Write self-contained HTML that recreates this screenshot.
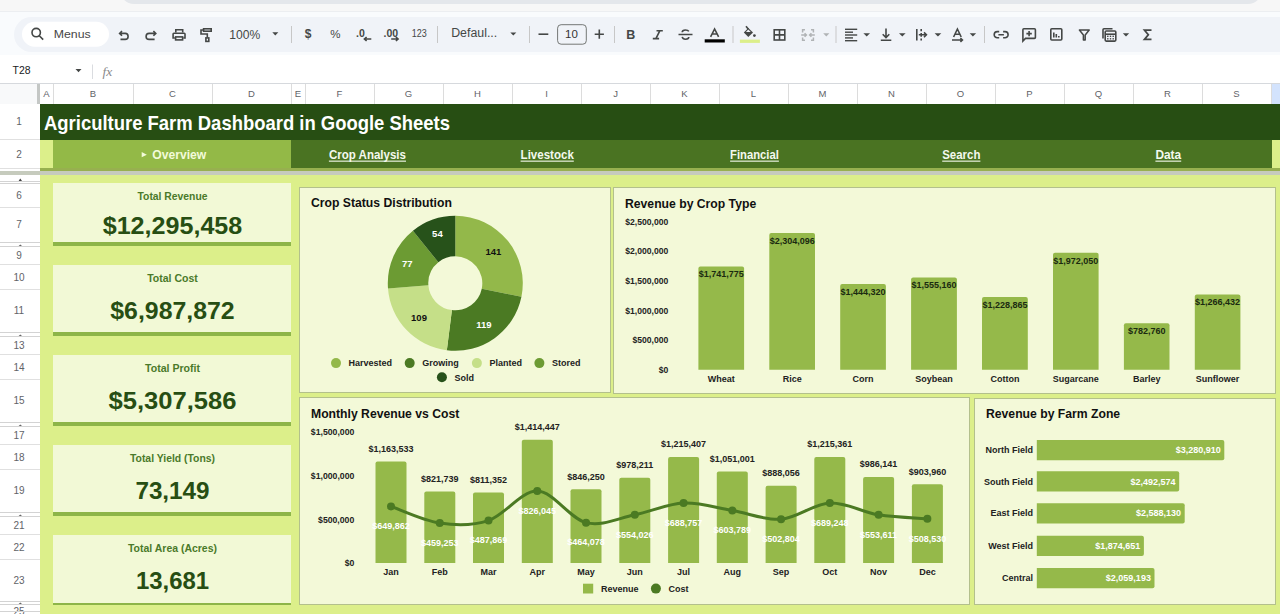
<!DOCTYPE html><html><head><meta charset="utf-8"><style>
*{margin:0;padding:0;box-sizing:border-box}
html,body{width:1280px;height:614px;overflow:hidden;background:#f9fbfd;font-family:"Liberation Sans",sans-serif}
.a{position:absolute}
.ch{position:absolute;top:84px;height:20px;color:#5f6368;font-size:9.5px;text-align:center;line-height:19.5px}
.rh{position:absolute;left:0;width:38px;color:#5f6368;font-size:10px;text-align:center}
.card{position:absolute;left:53px;width:238px;background:#f2f9d6;border-bottom:4px solid #8db548}
.ct{position:absolute;left:0;width:238px;text-align:center;color:#3f6a1f;font-weight:bold;font-size:11px}
.cv{position:absolute;left:0;width:238px;text-align:center;color:#274e13;font-weight:bold;font-size:27px}
.chart{position:absolute;background:#f3f9d8;border:1px solid #b3c08c}
.tt{position:absolute;font-weight:bold;font-size:12.5px;color:#111;white-space:nowrap}
.nav{position:absolute;top:140px;height:28px;line-height:28px;color:#fff;font-weight:bold;font-size:12px;text-decoration:underline;white-space:nowrap;text-align:center}
</style></head><body>
<div class="a" style="left:0;top:0;width:1280px;height:11px;background:#f7f7f7"></div>
<div class="a" style="left:120px;top:-20px;width:1142px;height:24px;background:#e4e7eb;border-radius:0 0 14px 14px"></div>
<div class="a" style="left:0;top:11px;width:1280px;height:1px;background:#eceef1"></div>
<div class="a" style="left:14px;top:17px;width:1300px;height:34.5px;background:#f0f3f8;border-radius:18px"></div>
<div class="a" style="left:0;top:55px;width:1280px;height:29px;background:#fff"></div>
<svg class="a" style="left:0;top:0" width="1280" height="90"><rect x="22" y="21.75" width="87" height="25" rx="12.5" fill="#fff"/><circle cx="36.2" cy="32.6" r="4.2" fill="none" stroke="#444746" stroke-width="1.6" stroke-width="1.7"/><path d="M39.3,35.7 L43.2,39.6" fill="none" stroke="#444746" stroke-width="1.6" stroke-width="1.9"/><text x="53.75" y="37.8" font-family="Liberation Sans" font-size="11.5" fill="#474747" textLength="37" lengthAdjust="spacingAndGlyphs">Menus</text><path d="M120.5,39.4 H125.1 A3,3 0 0 0 125.1,33.4 H119.6 M122,31 L119.6,33.4 L122,35.8" fill="none" stroke="#444746" stroke-width="1.6"/><path d="M154.6,39.4 H149.1 A3,3 0 0 1 149.1,33.4 H155.8 M153.4,31 L155.8,33.4 L153.4,35.8" fill="none" stroke="#444746" stroke-width="1.6"/><path d="M175.8,32.4 V29.7 H182.7 V32.4" fill="none" stroke="#444746" stroke-width="1.6" stroke-width="1.5"/><path d="M174.9,38 H173.1 V34 Q173.1,33.3 173.9,33.3 H184.2 Q185,33.3 185,34 V38 H183.3" fill="none" stroke="#444746" stroke-width="1.6" stroke-width="1.5"/><rect x="175.6" y="36.9" width="7" height="3" fill="none" stroke="#444746" stroke-width="1.6" stroke-width="1.5"/><rect x="203.6" y="28.8" width="7.6" height="2.4" fill="none" stroke="#444746" stroke-width="1.6" stroke-width="1.5"/><path d="M203.4,30 H201 V34 H207.3 V37.5" fill="none" stroke="#444746" stroke-width="1.6" stroke-width="1.5"/><rect x="205.9" y="37.9" width="2.9" height="3.5" fill="none" stroke="#444746" stroke-width="1.6" stroke-width="1.5"/><text x="229.2" y="39" font-family="Liberation Sans" font-size="12.3" fill="#444746" textLength="31" lengthAdjust="spacingAndGlyphs">100%</text><path d="M272.3,32.2 L278.3,32.2 L275.3,35.400000000000006Z" fill="#444746"/><rect x="291" y="26" width="1" height="17" fill="#c7c7c7"/><text x="308" y="38" font-family="Liberation Sans" font-weight="bold" font-size="12" fill="#444746" text-anchor="middle">$</text><text x="335.3" y="37.8" font-family="Liberation Sans" font-size="11.5" fill="#444746" text-anchor="middle">%</text><text x="356" y="37.4" font-family="Liberation Sans" font-weight="bold" font-size="10.5" fill="#444746">.0</text><path d="M371.3,39 H364.5 M366.6,37 L364.4,39 L366.6,41" fill="none" stroke="#444746" stroke-width="1.6" stroke-width="1.4"/><text x="383.5" y="37.4" font-family="Liberation Sans" font-weight="bold" font-size="10.5" fill="#444746">.00</text><path d="M391.2,39 H398 M395.9,37 L398.1,39 L395.9,41" fill="none" stroke="#444746" stroke-width="1.6" stroke-width="1.4"/><text x="411.8" y="37.3" font-family="Liberation Sans" font-size="10" fill="#444746" textLength="15" lengthAdjust="spacingAndGlyphs">123</text><rect x="437" y="26" width="1" height="17" fill="#c7c7c7"/><text x="451.2" y="37.3" font-family="Liberation Sans" font-size="12" fill="#444746" textLength="46" lengthAdjust="spacingAndGlyphs">Defaul...</text><path d="M510.3,32.4 L516.3,32.4 L513.3,35.6Z" fill="#444746"/><rect x="529" y="26" width="1" height="17" fill="#c7c7c7"/><path d="M538.5,34.2 H548.3" fill="none" stroke="#444746" stroke-width="1.6" stroke-width="1.7"/><rect x="557.6" y="24.7" width="28.7" height="19.5" rx="3.5" fill="none" stroke="#747775" stroke-width="1"/><text x="571.5" y="37.7" font-family="Liberation Sans" font-size="11.5" fill="#333" text-anchor="middle">10</text><path d="M594.7,34.2 H603.9 M599.3,29.6 V38.8" fill="none" stroke="#444746" stroke-width="1.6" stroke-width="1.7"/><rect x="614" y="26" width="1" height="17" fill="#c7c7c7"/><text x="630.7" y="39.3" font-family="Liberation Sans" font-weight="bold" font-size="12.5" fill="#444746" text-anchor="middle">B</text><path d="M656.5,30.7 H662.8 M652.8,38.6 H659.1 M659.9,30.7 L655.9,38.6" fill="none" stroke="#444746" stroke-width="1.6" stroke-width="1.7"/><path d="M678.5,34.5 H692.5 M688.8,31.4 Q688,30 685.5,30 Q682.2,30 682.2,32.3 M682.2,36.8 Q682.7,39.2 685.5,39.2 Q688.8,39.2 688.8,37" fill="none" stroke="#444746" stroke-width="1.6" stroke-width="1.5"/><path d="M710.6,36.8 L714.6,29 L718.6,36.8 M712,34 H717.2" fill="none" stroke="#444746" stroke-width="1.6" stroke-width="1.6"/><rect x="704.7" y="39.3" width="20.1" height="3.2" fill="#000"/><rect x="732.5" y="26" width="1" height="17" fill="#c7c7c7"/><path d="M746,26.3 L748.6,29.6" fill="none" stroke="#444746" stroke-width="1.6" stroke-width="1.5"/><path d="M743.8,32.6 L748.3,28.1 L753,32.6 L748.3,37.1Z" fill="#444746"/><path d="M745.9,32 H750.7 L748.3,29.6Z" fill="#f0f3f8"/><circle cx="754.4" cy="35.6" r="1.4" fill="#444746"/><rect x="739.9" y="39.6" width="20" height="3.3" fill="#dcef8a"/><rect x="774.2" y="29.8" width="10.6" height="10.2" fill="none" stroke="#444746" stroke-width="1.6" stroke-width="1.8"/><path d="M779.5,29.8 V40 M774.2,34.9 H784.8" fill="none" stroke="#444746" stroke-width="1.6" stroke-width="1.6"/><path d="M805,29.8 H802.6 V32.6 M802.6,37.4 V40.2 H805 M811,29.8 H813.4 V32.6 M813.4,37.4 V40.2 H811 M801.2,35 H806.4 M804.6,33.2 L806.4,35 L804.6,36.8 M814.8,35 H809.6 M811.4,33.2 L809.6,35 L811.4,36.8" fill="none" stroke="#b0b3b5" stroke-width="1.5"/><path d="M823.2,33.2 L829.4,33.2 L826.3,36.400000000000006Z" fill="#b0b3b5"/><rect x="835.5" y="26" width="1" height="17" fill="#c7c7c7"/><rect x="845" y="28.6" width="12.2" height="1.4" fill="#444746"/><rect x="845" y="31.500000000000004" width="8" height="1.4" fill="#444746"/><rect x="845" y="34.3" width="12.2" height="1.4" fill="#444746"/><rect x="845" y="37.199999999999996" width="8" height="1.4" fill="#444746"/><rect x="845" y="40.0" width="12.2" height="1.4" fill="#444746"/><path d="M863.4,33.2 L870,33.2 L866.7,36.400000000000006Z" fill="#444746"/><path d="M886,28.6 V37.4 M882.7,34.3 L886,37.6 L889.3,34.3" fill="none" stroke="#444746" stroke-width="1.6" stroke-width="1.6"/><rect x="880.8" y="39.5" width="10.5" height="1.5" fill="#444746"/><path d="M899,33.2 L905.6,33.2 L902.3,36.400000000000006Z" fill="#444746"/><path d="M916.8,29 V40.6 M921.2,29 V31.2 M921.2,33 V36.7 M921.2,38.4 V40.6 M918.8,34.8 H926.3 M924,32.4 L926.4,34.8 L924,37.2" fill="none" stroke="#444746" stroke-width="1.6" stroke-width="1.5"/><path d="M934.6,33.2 L941.3,33.2 L937.95,36.400000000000006Z" fill="#444746"/><path d="M953.6,37 L957.4,29 L961.2,37 M954.9,34.3 H960" fill="none" stroke="#444746" stroke-width="1.6" stroke-width="1.5"/><path d="M952,40 H962.3 M960.4,38.1 L962.4,40 L960.4,41.9" fill="none" stroke="#444746" stroke-width="1.6" stroke-width="1.4"/><path d="M969.7,33.2 L976.1,33.2 L972.9000000000001,36.400000000000006Z" fill="#444746"/><rect x="984" y="26" width="1" height="17" fill="#c7c7c7"/><path d="M999.2,31.6 H997.3 A3.1,3.1 0 0 0 997.3,37.8 H999.2 M1003.1,31.6 H1005 A3.1,3.1 0 0 1 1005,37.8 H1003.1 M998.4,34.7 H1003.9" fill="none" stroke="#444746" stroke-width="1.6" stroke-width="1.6"/><path d="M1022.9,41 V29.8 Q1022.9,28.8 1023.9,28.8 H1034.4 Q1035.4,28.8 1035.4,29.8 V37.4 Q1035.4,38.4 1034.4,38.4 H1025.5 Z M1029.1,30.9 V36.3 M1026.4,33.6 H1031.8" fill="none" stroke="#444746" stroke-width="1.6" stroke-width="1.5"/><rect x="1050.8" y="28.8" width="11" height="11.2" rx="1" fill="none" stroke="#444746" stroke-width="1.6" stroke-width="1.5"/><path d="M1053.8,32.5 V37.5 M1056.3,34 V37.5 M1058.8,36 V37.5" fill="none" stroke="#444746" stroke-width="1.6" stroke-width="1.3"/><path d="M1079.4,30 H1089.2 L1085.2,35 V40 H1083.4 V35Z" fill="none" stroke="#444746" stroke-width="1.5" stroke-linejoin="round"/><path d="M1103,38.5 V29.7 Q1103,28.7 1104,28.7 H1112.5" fill="none" stroke="#444746" stroke-width="1.6" stroke-width="1.4"/><rect x="1105.2" y="31" width="10.6" height="10.1" rx="1" fill="none" stroke="#444746" stroke-width="1.6" stroke-width="1.5"/><path d="M1105.5,34.2 H1115.5" fill="none" stroke="#444746" stroke-width="1.6" stroke-width="1.4"/><rect x="1107.1" y="35.599999999999994" width="1.4" height="1.4" fill="#444746"/><rect x="1107.1" y="38.099999999999994" width="1.4" height="1.4" fill="#444746"/><rect x="1109.8" y="35.599999999999994" width="1.4" height="1.4" fill="#444746"/><rect x="1109.8" y="38.099999999999994" width="1.4" height="1.4" fill="#444746"/><rect x="1112.5" y="35.599999999999994" width="1.4" height="1.4" fill="#444746"/><rect x="1112.5" y="38.099999999999994" width="1.4" height="1.4" fill="#444746"/><path d="M1122.8,33.2 L1129.2,33.2 L1126.0,36.400000000000006Z" fill="#444746"/><path d="M1151.5,30.2 H1144.5 L1148.3,34.8 L1144.5,39.4 H1151.5" fill="none" stroke="#444746" stroke-width="1.8"/><text x="12.5" y="74.4" font-family="Liberation Sans" font-size="11" fill="#202124" textLength="18" lengthAdjust="spacingAndGlyphs">T28</text><path d="M75.5,69 L81.5,69 L78.5,72.2Z" fill="#444746"/><rect x="92" y="64.5" width="1" height="14.5" fill="#dadce0"/><text x="102.5" y="75.5" font-family="Liberation Serif" font-style="italic" font-size="13.5" fill="#8a8a8a">fx</text></svg>
<div class="a" style="left:0;top:83px;width:1280px;height:1px;background:#d6d9dd"></div>
<div class="a" style="left:0;top:84px;width:1280px;height:20px;background:#fff"></div>
<div class="ch" style="left:40px;width:13px">A</div>
<div class="a" style="left:53px;top:84px;width:1px;height:20px;background:#dcdcdc"></div>
<div class="ch" style="left:53px;width:80px">B</div>
<div class="a" style="left:133px;top:84px;width:1px;height:20px;background:#dcdcdc"></div>
<div class="ch" style="left:133px;width:79px">C</div>
<div class="a" style="left:212px;top:84px;width:1px;height:20px;background:#dcdcdc"></div>
<div class="ch" style="left:212px;width:79px">D</div>
<div class="a" style="left:291px;top:84px;width:1px;height:20px;background:#dcdcdc"></div>
<div class="ch" style="left:291px;width:14px">E</div>
<div class="a" style="left:305px;top:84px;width:1px;height:20px;background:#dcdcdc"></div>
<div class="ch" style="left:305px;width:69px">F</div>
<div class="a" style="left:374px;top:84px;width:1px;height:20px;background:#dcdcdc"></div>
<div class="ch" style="left:374px;width:69px">G</div>
<div class="a" style="left:443px;top:84px;width:1px;height:20px;background:#dcdcdc"></div>
<div class="ch" style="left:443px;width:69px">H</div>
<div class="a" style="left:512px;top:84px;width:1px;height:20px;background:#dcdcdc"></div>
<div class="ch" style="left:512px;width:69px">I</div>
<div class="a" style="left:581px;top:84px;width:1px;height:20px;background:#dcdcdc"></div>
<div class="ch" style="left:581px;width:69px">J</div>
<div class="a" style="left:650px;top:84px;width:1px;height:20px;background:#dcdcdc"></div>
<div class="ch" style="left:650px;width:69px">K</div>
<div class="a" style="left:719px;top:84px;width:1px;height:20px;background:#dcdcdc"></div>
<div class="ch" style="left:719px;width:69px">L</div>
<div class="a" style="left:788px;top:84px;width:1px;height:20px;background:#dcdcdc"></div>
<div class="ch" style="left:788px;width:69px">M</div>
<div class="a" style="left:857px;top:84px;width:1px;height:20px;background:#dcdcdc"></div>
<div class="ch" style="left:857px;width:69px">N</div>
<div class="a" style="left:926px;top:84px;width:1px;height:20px;background:#dcdcdc"></div>
<div class="ch" style="left:926px;width:69px">O</div>
<div class="a" style="left:995px;top:84px;width:1px;height:20px;background:#dcdcdc"></div>
<div class="ch" style="left:995px;width:69px">P</div>
<div class="a" style="left:1064px;top:84px;width:1px;height:20px;background:#dcdcdc"></div>
<div class="ch" style="left:1064px;width:69px">Q</div>
<div class="a" style="left:1133px;top:84px;width:1px;height:20px;background:#dcdcdc"></div>
<div class="ch" style="left:1133px;width:69px">R</div>
<div class="a" style="left:1202px;top:84px;width:1px;height:20px;background:#dcdcdc"></div>
<div class="ch" style="left:1202px;width:69px">S</div>
<div class="a" style="left:1271px;top:84px;width:1px;height:20px;background:#dcdcdc"></div>
<div class="a" style="left:1272px;top:84px;width:8px;height:20px;background:#d3e3fd"></div>
<div class="a" style="left:0;top:84px;width:37px;height:20px;background:#f8f9fa"></div>
<div class="a" style="left:37px;top:84px;width:3px;height:20px;background:#c4c7c5"></div>
<div class="a" style="left:0;top:104px;width:40px;height:510px;background:#fff"></div>
<div class="rh" style="top:104px;height:36px;line-height:36px">1</div>
<div class="a" style="left:0;top:139px;width:40px;height:1px;background:#e0e0e0"></div>
<div class="rh" style="top:140px;height:29px;line-height:29px">2</div>
<div class="a" style="left:0;top:168px;width:40px;height:1px;background:#e0e0e0"></div>
<div class="rh" style="top:183px;height:25px;line-height:25px">6</div>
<div class="a" style="left:0;top:207px;width:40px;height:1px;background:#e0e0e0"></div>
<div class="rh" style="top:208px;height:34px;line-height:34px">7</div>
<div class="rh" style="top:246px;height:19px;line-height:19px">9</div>
<div class="a" style="left:0;top:264px;width:40px;height:1px;background:#e0e0e0"></div>
<div class="rh" style="top:265px;height:25px;line-height:25px">10</div>
<div class="a" style="left:0;top:289px;width:40px;height:1px;background:#e0e0e0"></div>
<div class="rh" style="top:290px;height:42px;line-height:42px">11</div>
<div class="rh" style="top:336px;height:19px;line-height:19px">13</div>
<div class="a" style="left:0;top:354px;width:40px;height:1px;background:#e0e0e0"></div>
<div class="rh" style="top:355px;height:25px;line-height:25px">14</div>
<div class="a" style="left:0;top:379px;width:40px;height:1px;background:#e0e0e0"></div>
<div class="rh" style="top:380px;height:42px;line-height:42px">15</div>
<div class="rh" style="top:426px;height:19px;line-height:19px">17</div>
<div class="a" style="left:0;top:444px;width:40px;height:1px;background:#e0e0e0"></div>
<div class="rh" style="top:445px;height:25px;line-height:25px">18</div>
<div class="a" style="left:0;top:469px;width:40px;height:1px;background:#e0e0e0"></div>
<div class="rh" style="top:470px;height:42px;line-height:42px">19</div>
<div class="rh" style="top:516px;height:19px;line-height:19px">21</div>
<div class="a" style="left:0;top:534px;width:40px;height:1px;background:#e0e0e0"></div>
<div class="rh" style="top:535px;height:25px;line-height:25px">22</div>
<div class="a" style="left:0;top:559px;width:40px;height:1px;background:#e0e0e0"></div>
<div class="rh" style="top:560px;height:42px;line-height:42px">23</div>
<div class="rh" style="top:604px;height:16px;line-height:16px">25</div>
<div class="a" style="left:0;top:181px;width:40px;height:1px;background:#d3d3d3"></div>
<div class="a" style="left:0;top:183px;width:40px;height:1px;background:#d3d3d3"></div>
<div class="a" style="left:0;top:242px;width:40px;height:1px;background:#d3d3d3"></div>
<div class="a" style="left:0;top:246px;width:40px;height:1px;background:#d3d3d3"></div>
<div class="a" style="left:0;top:332px;width:40px;height:1px;background:#d3d3d3"></div>
<div class="a" style="left:0;top:336px;width:40px;height:1px;background:#d3d3d3"></div>
<div class="a" style="left:0;top:422px;width:40px;height:1px;background:#d3d3d3"></div>
<div class="a" style="left:0;top:426px;width:40px;height:1px;background:#d3d3d3"></div>
<div class="a" style="left:0;top:512px;width:40px;height:1px;background:#d3d3d3"></div>
<div class="a" style="left:0;top:516px;width:40px;height:1px;background:#d3d3d3"></div>
<div class="a" style="left:0;top:601px;width:40px;height:1px;background:#d3d3d3"></div>
<div class="a" style="left:0;top:604px;width:40px;height:1px;background:#d3d3d3"></div>
<svg class="a" style="left:0;top:0" width="40" height="614"><path d="M18.6,181 L20.3,178.6 L22,181Z" fill="#444"/><path d="M18.6,246 L20.3,244.6 L22,246Z" fill="#666"/><path d="M18.6,336 L20.3,334.6 L22,336Z" fill="#666"/><path d="M18.6,426 L20.3,424.6 L22,426Z" fill="#666"/><path d="M18.6,516 L20.3,514.6 L22,516Z" fill="#666"/><path d="M18.6,604 L20.3,602.6 L22,604Z" fill="#666"/><rect x="0" y="611" width="40" height="1" fill="#d3d3d3"/></svg>
<div class="a" style="left:40px;top:104px;width:1240px;height:510px;background:#dcef8a"></div>
<div class="a" style="left:40px;top:104px;width:1240px;height:36px;background:#274e13"></div>
<div class="a" style="left:53px;top:140px;width:238px;height:28px;background:#93b947"></div>
<div class="a" style="left:291px;top:140px;width:981px;height:28px;background:#4a7322"></div>
<div class="a" style="left:40px;top:168px;width:1240px;height:3px;background:#97b04f"></div>
<div class="a" style="left:0;top:171px;width:1280px;height:4px;background:#c6cbbd"></div>
<div class="card" style="top:183px;height:63px;border-bottom-width:4px"></div>
<div class="card" style="top:265px;height:71px;border-bottom-width:4px"></div>
<div class="card" style="top:355px;height:71px;border-bottom-width:4px"></div>
<div class="card" style="top:445px;height:71px;border-bottom-width:4px"></div>
<div class="card" style="top:535px;height:69.5px;border-bottom-width:2.5px"></div>
<svg class="a" style="left:0;top:0" width="1280" height="614"><text x="44" y="129.7" font-family="Liberation Sans" font-weight="bold" font-size="19.3" fill="#fff" textLength="406" lengthAdjust="spacingAndGlyphs">Agriculture Farm Dashboard in Google Sheets</text><path d="M141.7,152.1 L146.8,154.65 L141.7,157.2Z" fill="#f2fbd9"/><text x="152.3" y="159.1" font-family="Liberation Sans" font-weight="bold" font-size="12.3" fill="#f2fbd9" textLength="54" lengthAdjust="spacingAndGlyphs">Overview</text><text x="328.9" y="159.3" font-family="Liberation Sans" font-weight="bold" font-size="12.3" fill="#f4f9ee" textLength="77.1" lengthAdjust="spacingAndGlyphs">Crop Analysis</text><rect x="328.9" y="160.6" width="77.1" height="1.1" fill="#f4f9ee"/><text x="520.6" y="159.3" font-family="Liberation Sans" font-weight="bold" font-size="12.3" fill="#f4f9ee" textLength="53.2" lengthAdjust="spacingAndGlyphs">Livestock</text><rect x="520.6" y="160.6" width="53.2" height="1.1" fill="#f4f9ee"/><text x="730.1" y="159.3" font-family="Liberation Sans" font-weight="bold" font-size="12.3" fill="#f4f9ee" textLength="48.8" lengthAdjust="spacingAndGlyphs">Financial</text><rect x="730.1" y="160.6" width="48.8" height="1.1" fill="#f4f9ee"/><text x="942.2" y="159.3" font-family="Liberation Sans" font-weight="bold" font-size="12.3" fill="#f4f9ee" textLength="38.2" lengthAdjust="spacingAndGlyphs">Search</text><rect x="942.2" y="160.6" width="38.2" height="1.1" fill="#f4f9ee"/><text x="1155.4" y="159.3" font-family="Liberation Sans" font-weight="bold" font-size="12.3" fill="#f4f9ee" textLength="25.8" lengthAdjust="spacingAndGlyphs">Data</text><rect x="1155.4" y="160.6" width="25.8" height="1.1" fill="#f4f9ee"/><text x="172.5" y="200.2" font-family="Liberation Sans" font-weight="bold" font-size="10.2" fill="#4a7a2a" text-anchor="middle" textLength="70" lengthAdjust="spacingAndGlyphs">Total Revenue</text><text x="172.5" y="233.8" font-family="Liberation Sans" font-weight="bold" font-size="24" fill="#274e13" text-anchor="middle" textLength="139.6" lengthAdjust="spacingAndGlyphs">$12,295,458</text><text x="172.5" y="282.2" font-family="Liberation Sans" font-weight="bold" font-size="10.2" fill="#4a7a2a" text-anchor="middle" textLength="50.6" lengthAdjust="spacingAndGlyphs">Total Cost</text><text x="172.5" y="319.1" font-family="Liberation Sans" font-weight="bold" font-size="24" fill="#274e13" text-anchor="middle" textLength="124.4" lengthAdjust="spacingAndGlyphs">$6,987,872</text><text x="172.5" y="372.2" font-family="Liberation Sans" font-weight="bold" font-size="10.2" fill="#4a7a2a" text-anchor="middle" textLength="55" lengthAdjust="spacingAndGlyphs">Total Profit</text><text x="172.5" y="409.1" font-family="Liberation Sans" font-weight="bold" font-size="24" fill="#274e13" text-anchor="middle" textLength="128" lengthAdjust="spacingAndGlyphs">$5,307,586</text><text x="172.5" y="462.2" font-family="Liberation Sans" font-weight="bold" font-size="10.2" fill="#4a7a2a" text-anchor="middle" textLength="85" lengthAdjust="spacingAndGlyphs">Total Yield (Tons)</text><text x="172.5" y="499.1" font-family="Liberation Sans" font-weight="bold" font-size="24" fill="#274e13" text-anchor="middle" textLength="74.2" lengthAdjust="spacingAndGlyphs">73,149</text><text x="172.5" y="552.2" font-family="Liberation Sans" font-weight="bold" font-size="10.2" fill="#4a7a2a" text-anchor="middle" textLength="89" lengthAdjust="spacingAndGlyphs">Total Area (Acres)</text><text x="172.5" y="589.1" font-family="Liberation Sans" font-weight="bold" font-size="24" fill="#274e13" text-anchor="middle" textLength="73.2" lengthAdjust="spacingAndGlyphs">13,681</text></svg>
<div class="chart" style="left:299px;top:187px;width:312px;height:206px"></div>
<div class="chart" style="left:613px;top:187px;width:663px;height:207px"></div>
<div class="chart" style="left:299px;top:397px;width:671px;height:208px"></div>
<div class="chart" style="left:974px;top:398px;width:302px;height:207px"></div>
<svg class="a" style="left:0;top:0" width="1280" height="614"><text x="311" y="207.3" font-family="Liberation Sans" font-weight="bold" font-size="12.2" fill="#111">Crop Status Distribution</text><text x="625" y="207.5" font-family="Liberation Sans" font-weight="bold" font-size="12.2" fill="#111">Revenue by Crop Type</text><text x="311" y="418.3" font-family="Liberation Sans" font-weight="bold" font-size="12.2" fill="#111">Monthly Revenue vs Cost</text><text x="986" y="418.3" font-family="Liberation Sans" font-weight="bold" font-size="12.2" fill="#111">Revenue by Farm Zone</text><path d="M455.30,215.80 A67.5,67.5 0 0 1 521.44,296.78 L481.76,288.69 A27,27 0 0 0 455.30,256.30Z" fill="#93b84a"/><text x="493.4" y="255.4" font-family="Liberation Sans" font-weight="bold" font-size="9.5" fill="#111" text-anchor="middle">141</text><path d="M521.44,296.78 A67.5,67.5 0 0 1 446.84,350.27 L451.92,310.09 A27,27 0 0 0 481.76,288.69Z" fill="#4b7a23"/><text x="484.0" y="328.0" font-family="Liberation Sans" font-weight="bold" font-size="9.5" fill="#fff" text-anchor="middle">119</text><path d="M446.84,350.27 A67.5,67.5 0 0 1 387.99,288.38 L428.38,285.33 A27,27 0 0 0 451.92,310.09Z" fill="#c5df88"/><text x="419.0" y="320.9" font-family="Liberation Sans" font-weight="bold" font-size="9.5" fill="#111" text-anchor="middle">109</text><path d="M387.99,288.38 A67.5,67.5 0 0 1 412.93,230.75 L438.35,262.28 A27,27 0 0 0 428.38,285.33Z" fill="#6c9b33"/><text x="407.2" y="266.6" font-family="Liberation Sans" font-weight="bold" font-size="9.5" fill="#fff" text-anchor="middle">77</text><path d="M412.93,230.75 A67.5,67.5 0 0 1 455.30,215.80 L455.30,256.30 A27,27 0 0 0 438.35,262.28Z" fill="#27521a"/><text x="437.4" y="237.0" font-family="Liberation Sans" font-weight="bold" font-size="9.5" fill="#fff" text-anchor="middle">54</text><circle cx="336" cy="363.1" r="5" fill="#93b84a"/><text x="348.5" y="366.3" font-family="Liberation Sans" font-weight="bold" font-size="9" fill="#222">Harvested</text><circle cx="409.7" cy="363.1" r="5" fill="#4b7a23"/><text x="422.2" y="366.3" font-family="Liberation Sans" font-weight="bold" font-size="9" fill="#222">Growing</text><circle cx="476.9" cy="363.1" r="5" fill="#c5df88"/><text x="489.4" y="366.3" font-family="Liberation Sans" font-weight="bold" font-size="9" fill="#222">Planted</text><circle cx="539.4" cy="363.1" r="5" fill="#6c9b33"/><text x="551.9" y="366.3" font-family="Liberation Sans" font-weight="bold" font-size="9" fill="#222">Stored</text><circle cx="441.9" cy="377.3" r="5" fill="#27521a"/><text x="454.4" y="380.5" font-family="Liberation Sans" font-weight="bold" font-size="9" fill="#222">Sold</text><text x="668.3" y="372.8" font-family="Liberation Sans" font-weight="bold" font-size="8.6" fill="#222" text-anchor="end">$0</text><text x="668.3" y="343.2" font-family="Liberation Sans" font-weight="bold" font-size="8.6" fill="#222" text-anchor="end">$500,000</text><text x="668.3" y="313.5" font-family="Liberation Sans" font-weight="bold" font-size="8.6" fill="#222" text-anchor="end">$1,000,000</text><text x="668.3" y="283.9" font-family="Liberation Sans" font-weight="bold" font-size="8.6" fill="#222" text-anchor="end">$1,500,000</text><text x="668.3" y="254.2" font-family="Liberation Sans" font-weight="bold" font-size="8.6" fill="#222" text-anchor="end">$2,000,000</text><text x="668.3" y="224.6" font-family="Liberation Sans" font-weight="bold" font-size="8.6" fill="#222" text-anchor="end">$2,500,000</text><path d="M698.4,369.7 L698.4,268.4 Q698.4,266.4 700.4,266.4 L742.1,266.4 Q744.1,266.4 744.1,268.4 L744.1,369.7Z" fill="#95b94a"/><text x="721.3" y="277.1" font-family="Liberation Sans" font-weight="bold" font-size="9" fill="#1a2a10" text-anchor="middle">$1,741,775</text><text x="721.3" y="381.6" font-family="Liberation Sans" font-weight="bold" font-size="9" fill="#222" text-anchor="middle">Wheat</text><path d="M769.3,369.7 L769.3,235.1 Q769.3,233.1 771.3,233.1 L813.0,233.1 Q815.0,233.1 815.0,235.1 L815.0,369.7Z" fill="#95b94a"/><text x="792.2" y="243.8" font-family="Liberation Sans" font-weight="bold" font-size="9" fill="#1a2a10" text-anchor="middle">$2,304,096</text><text x="792.2" y="381.6" font-family="Liberation Sans" font-weight="bold" font-size="9" fill="#222" text-anchor="middle">Rice</text><path d="M840.2,369.7 L840.2,286.1 Q840.2,284.1 842.2,284.1 L883.9,284.1 Q885.9,284.1 885.9,286.1 L885.9,369.7Z" fill="#95b94a"/><text x="863.1" y="294.8" font-family="Liberation Sans" font-weight="bold" font-size="9" fill="#1a2a10" text-anchor="middle">$1,444,320</text><text x="863.1" y="381.6" font-family="Liberation Sans" font-weight="bold" font-size="9" fill="#222" text-anchor="middle">Corn</text><path d="M911.1,369.7 L911.1,279.5 Q911.1,277.5 913.1,277.5 L954.9,277.5 Q956.9,277.5 956.9,279.5 L956.9,369.7Z" fill="#95b94a"/><text x="934.0" y="288.2" font-family="Liberation Sans" font-weight="bold" font-size="9" fill="#1a2a10" text-anchor="middle">$1,555,160</text><text x="934.0" y="381.6" font-family="Liberation Sans" font-weight="bold" font-size="9" fill="#222" text-anchor="middle">Soybean</text><path d="M982.0,369.7 L982.0,298.9 Q982.0,296.9 984.0,296.9 L1025.8,296.9 Q1027.8,296.9 1027.8,298.9 L1027.8,369.7Z" fill="#95b94a"/><text x="1004.9" y="307.6" font-family="Liberation Sans" font-weight="bold" font-size="9" fill="#1a2a10" text-anchor="middle">$1,228,865</text><text x="1004.9" y="381.6" font-family="Liberation Sans" font-weight="bold" font-size="9" fill="#222" text-anchor="middle">Cotton</text><path d="M1053.0,369.7 L1053.0,254.8 Q1053.0,252.8 1055.0,252.8 L1096.6,252.8 Q1098.6,252.8 1098.6,254.8 L1098.6,369.7Z" fill="#95b94a"/><text x="1075.8" y="263.5" font-family="Liberation Sans" font-weight="bold" font-size="9" fill="#1a2a10" text-anchor="middle">$1,972,050</text><text x="1075.8" y="381.6" font-family="Liberation Sans" font-weight="bold" font-size="9" fill="#222" text-anchor="middle">Sugarcane</text><path d="M1123.9,369.7 L1123.9,325.3 Q1123.9,323.3 1125.9,323.3 L1167.5,323.3 Q1169.5,323.3 1169.5,325.3 L1169.5,369.7Z" fill="#95b94a"/><text x="1146.7" y="334.0" font-family="Liberation Sans" font-weight="bold" font-size="9" fill="#1a2a10" text-anchor="middle">$782,760</text><text x="1146.7" y="381.6" font-family="Liberation Sans" font-weight="bold" font-size="9" fill="#222" text-anchor="middle">Barley</text><path d="M1194.8,369.7 L1194.8,296.6 Q1194.8,294.6 1196.8,294.6 L1238.4,294.6 Q1240.4,294.6 1240.4,296.6 L1240.4,369.7Z" fill="#95b94a"/><text x="1217.6" y="305.3" font-family="Liberation Sans" font-weight="bold" font-size="9" fill="#1a2a10" text-anchor="middle">$1,266,432</text><text x="1217.6" y="381.6" font-family="Liberation Sans" font-weight="bold" font-size="9" fill="#222" text-anchor="middle">Sunflower</text><text x="354.3" y="566.2" font-family="Liberation Sans" font-weight="bold" font-size="8.7" fill="#222" text-anchor="end">$0</text><text x="354.3" y="522.6" font-family="Liberation Sans" font-weight="bold" font-size="8.7" fill="#222" text-anchor="end">$500,000</text><text x="354.3" y="479.0" font-family="Liberation Sans" font-weight="bold" font-size="8.7" fill="#222" text-anchor="end">$1,000,000</text><text x="354.3" y="435.4" font-family="Liberation Sans" font-weight="bold" font-size="8.7" fill="#222" text-anchor="end">$1,500,000</text><path d="M375.5,563.1 L375.5,463.6 Q375.5,461.6 377.5,461.6 L404.5,461.6 Q406.5,461.6 406.5,463.6 L406.5,563.1Z" fill="#95b94a"/><text x="391.0" y="451.8" font-family="Liberation Sans" font-weight="bold" font-size="9" fill="#222" text-anchor="middle">$1,163,533</text><text x="391.0" y="575.2" font-family="Liberation Sans" font-weight="bold" font-size="9" fill="#222" text-anchor="middle">Jan</text><path d="M424.3,563.1 L424.3,493.4 Q424.3,491.4 426.3,491.4 L453.3,491.4 Q455.3,491.4 455.3,493.4 L455.3,563.1Z" fill="#95b94a"/><text x="439.8" y="481.6" font-family="Liberation Sans" font-weight="bold" font-size="9" fill="#222" text-anchor="middle">$821,739</text><text x="439.8" y="575.2" font-family="Liberation Sans" font-weight="bold" font-size="9" fill="#222" text-anchor="middle">Feb</text><path d="M473.0,563.1 L473.0,494.4 Q473.0,492.4 475.0,492.4 L502.0,492.4 Q504.0,492.4 504.0,494.4 L504.0,563.1Z" fill="#95b94a"/><text x="488.5" y="482.6" font-family="Liberation Sans" font-weight="bold" font-size="9" fill="#222" text-anchor="middle">$811,352</text><text x="488.5" y="575.2" font-family="Liberation Sans" font-weight="bold" font-size="9" fill="#222" text-anchor="middle">Mar</text><path d="M521.8,563.1 L521.8,441.8 Q521.8,439.8 523.8,439.8 L550.8,439.8 Q552.8,439.8 552.8,441.8 L552.8,563.1Z" fill="#95b94a"/><text x="537.3" y="430.0" font-family="Liberation Sans" font-weight="bold" font-size="9" fill="#222" text-anchor="middle">$1,414,447</text><text x="537.3" y="575.2" font-family="Liberation Sans" font-weight="bold" font-size="9" fill="#222" text-anchor="middle">Apr</text><path d="M570.5,563.1 L570.5,491.3 Q570.5,489.3 572.5,489.3 L599.5,489.3 Q601.5,489.3 601.5,491.3 L601.5,563.1Z" fill="#95b94a"/><text x="586.0" y="479.5" font-family="Liberation Sans" font-weight="bold" font-size="9" fill="#222" text-anchor="middle">$846,250</text><text x="586.0" y="575.2" font-family="Liberation Sans" font-weight="bold" font-size="9" fill="#222" text-anchor="middle">May</text><path d="M619.3,563.1 L619.3,479.8 Q619.3,477.8 621.3,477.8 L648.3,477.8 Q650.3,477.8 650.3,479.8 L650.3,563.1Z" fill="#95b94a"/><text x="634.8" y="468.0" font-family="Liberation Sans" font-weight="bold" font-size="9" fill="#222" text-anchor="middle">$978,211</text><text x="634.8" y="575.2" font-family="Liberation Sans" font-weight="bold" font-size="9" fill="#222" text-anchor="middle">Jun</text><path d="M668.1,563.1 L668.1,459.1 Q668.1,457.1 670.1,457.1 L697.1,457.1 Q699.1,457.1 699.1,459.1 L699.1,563.1Z" fill="#95b94a"/><text x="683.6" y="447.3" font-family="Liberation Sans" font-weight="bold" font-size="9" fill="#222" text-anchor="middle">$1,215,407</text><text x="683.6" y="575.2" font-family="Liberation Sans" font-weight="bold" font-size="9" fill="#222" text-anchor="middle">Jul</text><path d="M716.8,563.1 L716.8,473.5 Q716.8,471.5 718.8,471.5 L745.8,471.5 Q747.8,471.5 747.8,473.5 L747.8,563.1Z" fill="#95b94a"/><text x="732.3" y="461.7" font-family="Liberation Sans" font-weight="bold" font-size="9" fill="#222" text-anchor="middle">$1,051,001</text><text x="732.3" y="575.2" font-family="Liberation Sans" font-weight="bold" font-size="9" fill="#222" text-anchor="middle">Aug</text><path d="M765.6,563.1 L765.6,487.7 Q765.6,485.7 767.6,485.7 L794.6,485.7 Q796.6,485.7 796.6,487.7 L796.6,563.1Z" fill="#95b94a"/><text x="781.1" y="475.9" font-family="Liberation Sans" font-weight="bold" font-size="9" fill="#222" text-anchor="middle">$888,056</text><text x="781.1" y="575.2" font-family="Liberation Sans" font-weight="bold" font-size="9" fill="#222" text-anchor="middle">Sep</text><path d="M814.3,563.1 L814.3,459.1 Q814.3,457.1 816.3,457.1 L843.3,457.1 Q845.3,457.1 845.3,459.1 L845.3,563.1Z" fill="#95b94a"/><text x="829.8" y="447.3" font-family="Liberation Sans" font-weight="bold" font-size="9" fill="#222" text-anchor="middle">$1,215,361</text><text x="829.8" y="575.2" font-family="Liberation Sans" font-weight="bold" font-size="9" fill="#222" text-anchor="middle">Oct</text><path d="M863.1,563.1 L863.1,479.1 Q863.1,477.1 865.1,477.1 L892.1,477.1 Q894.1,477.1 894.1,479.1 L894.1,563.1Z" fill="#95b94a"/><text x="878.6" y="467.3" font-family="Liberation Sans" font-weight="bold" font-size="9" fill="#222" text-anchor="middle">$986,141</text><text x="878.6" y="575.2" font-family="Liberation Sans" font-weight="bold" font-size="9" fill="#222" text-anchor="middle">Nov</text><path d="M911.9,563.1 L911.9,486.3 Q911.9,484.3 913.9,484.3 L940.9,484.3 Q942.9,484.3 942.9,486.3 L942.9,563.1Z" fill="#95b94a"/><text x="927.4" y="474.5" font-family="Liberation Sans" font-weight="bold" font-size="9" fill="#222" text-anchor="middle">$903,960</text><text x="927.4" y="575.2" font-family="Liberation Sans" font-weight="bold" font-size="9" fill="#222" text-anchor="middle">Dec</text><path d="M391.00,506.43 C399.13,509.20 423.51,520.70 439.76,523.05 C456.01,525.41 472.27,525.89 488.52,520.56 C504.77,515.23 521.03,490.72 537.28,491.07 C553.53,491.41 569.79,518.68 586.04,522.63 C602.29,526.59 618.55,518.05 634.80,514.79 C651.05,511.52 667.31,503.76 683.56,503.04 C699.81,502.32 716.07,507.75 732.32,510.45 C748.57,513.15 764.83,520.50 781.08,519.26 C797.33,518.01 813.59,503.74 829.84,503.00 C846.09,502.26 862.35,512.20 878.60,514.83 C894.85,517.45 919.23,518.10 927.36,518.76" fill="none" stroke="#4b7a23" stroke-width="3"/><circle cx="391.00" cy="506.43" r="4" fill="#4b7a23"/><text x="391.0" y="529.2" font-family="Liberation Sans" font-weight="bold" font-size="9" fill="#fff" text-anchor="middle">$649,862</text><circle cx="439.76" cy="523.05" r="4" fill="#4b7a23"/><text x="439.8" y="545.9" font-family="Liberation Sans" font-weight="bold" font-size="9" fill="#fff" text-anchor="middle">$459,253</text><circle cx="488.52" cy="520.56" r="4" fill="#4b7a23"/><text x="488.5" y="543.4" font-family="Liberation Sans" font-weight="bold" font-size="9" fill="#fff" text-anchor="middle">$487,869</text><circle cx="537.28" cy="491.07" r="4" fill="#4b7a23"/><text x="537.3" y="513.9" font-family="Liberation Sans" font-weight="bold" font-size="9" fill="#fff" text-anchor="middle">$826,045</text><circle cx="586.04" cy="522.63" r="4" fill="#4b7a23"/><text x="586.0" y="545.4" font-family="Liberation Sans" font-weight="bold" font-size="9" fill="#fff" text-anchor="middle">$464,078</text><circle cx="634.80" cy="514.79" r="4" fill="#4b7a23"/><text x="634.8" y="537.6" font-family="Liberation Sans" font-weight="bold" font-size="9" fill="#fff" text-anchor="middle">$554,026</text><circle cx="683.56" cy="503.04" r="4" fill="#4b7a23"/><text x="683.6" y="525.8" font-family="Liberation Sans" font-weight="bold" font-size="9" fill="#fff" text-anchor="middle">$688,757</text><circle cx="732.32" cy="510.45" r="4" fill="#4b7a23"/><text x="732.3" y="533.2" font-family="Liberation Sans" font-weight="bold" font-size="9" fill="#fff" text-anchor="middle">$603,789</text><circle cx="781.08" cy="519.26" r="4" fill="#4b7a23"/><text x="781.1" y="542.1" font-family="Liberation Sans" font-weight="bold" font-size="9" fill="#fff" text-anchor="middle">$502,804</text><circle cx="829.84" cy="503.00" r="4" fill="#4b7a23"/><text x="829.8" y="525.8" font-family="Liberation Sans" font-weight="bold" font-size="9" fill="#fff" text-anchor="middle">$689,248</text><circle cx="878.60" cy="514.83" r="4" fill="#4b7a23"/><text x="878.6" y="537.6" font-family="Liberation Sans" font-weight="bold" font-size="9" fill="#fff" text-anchor="middle">$553,611</text><circle cx="927.36" cy="518.76" r="4" fill="#4b7a23"/><text x="927.4" y="541.6" font-family="Liberation Sans" font-weight="bold" font-size="9" fill="#fff" text-anchor="middle">$508,530</text><rect x="583" y="583.7" width="10.2" height="9.8" fill="#95b94a"/><text x="601" y="591.8" font-family="Liberation Sans" font-weight="bold" font-size="9" fill="#222">Revenue</text><circle cx="655.9" cy="588.6" r="5" fill="#4b7a23"/><text x="668.5" y="591.8" font-family="Liberation Sans" font-weight="bold" font-size="9" fill="#222">Cost</text><path d="M1036.8,440 L1222.3,440 Q1224.3,440 1224.3,442 L1224.3,458.3 Q1224.3,460.3 1222.3,460.3 L1036.8,460.3Z" fill="#95b94a"/><text x="1033" y="453.2" font-family="Liberation Sans" font-weight="bold" font-size="9" fill="#222" text-anchor="end">North Field</text><text x="1220.7" y="453.2" font-family="Liberation Sans" font-weight="bold" font-size="9" fill="#fff" text-anchor="end">$3,280,910</text><path d="M1036.8,471.3 L1177.2,471.3 Q1179.2,471.3 1179.2,473.3 L1179.2,489.6 Q1179.2,491.6 1177.2,491.6 L1036.8,491.6Z" fill="#95b94a"/><text x="1033" y="484.5" font-family="Liberation Sans" font-weight="bold" font-size="9" fill="#222" text-anchor="end">South Field</text><text x="1175.6" y="484.5" font-family="Liberation Sans" font-weight="bold" font-size="9" fill="#fff" text-anchor="end">$2,492,574</text><path d="M1036.8,503.2 L1182.7,503.2 Q1184.7,503.2 1184.7,505.2 L1184.7,521.5 Q1184.7,523.5 1182.7,523.5 L1036.8,523.5Z" fill="#95b94a"/><text x="1033" y="516.4" font-family="Liberation Sans" font-weight="bold" font-size="9" fill="#222" text-anchor="end">East Field</text><text x="1181.1" y="516.4" font-family="Liberation Sans" font-weight="bold" font-size="9" fill="#fff" text-anchor="end">$2,588,130</text><path d="M1036.8,535.7 L1141.9,535.7 Q1143.9,535.7 1143.9,537.7 L1143.9,554.0 Q1143.9,556.0 1141.9,556.0 L1036.8,556.0Z" fill="#95b94a"/><text x="1033" y="548.9" font-family="Liberation Sans" font-weight="bold" font-size="9" fill="#222" text-anchor="end">West Field</text><text x="1140.3" y="548.9" font-family="Liberation Sans" font-weight="bold" font-size="9" fill="#fff" text-anchor="end">$1,874,651</text><path d="M1036.8,568 L1152.5,568 Q1154.5,568 1154.5,570 L1154.5,586.3 Q1154.5,588.3 1152.5,588.3 L1036.8,588.3Z" fill="#95b94a"/><text x="1033" y="581.2" font-family="Liberation Sans" font-weight="bold" font-size="9" fill="#222" text-anchor="end">Central</text><text x="1150.9" y="581.2" font-family="Liberation Sans" font-weight="bold" font-size="9" fill="#fff" text-anchor="end">$2,059,193</text></svg>
</body></html>
